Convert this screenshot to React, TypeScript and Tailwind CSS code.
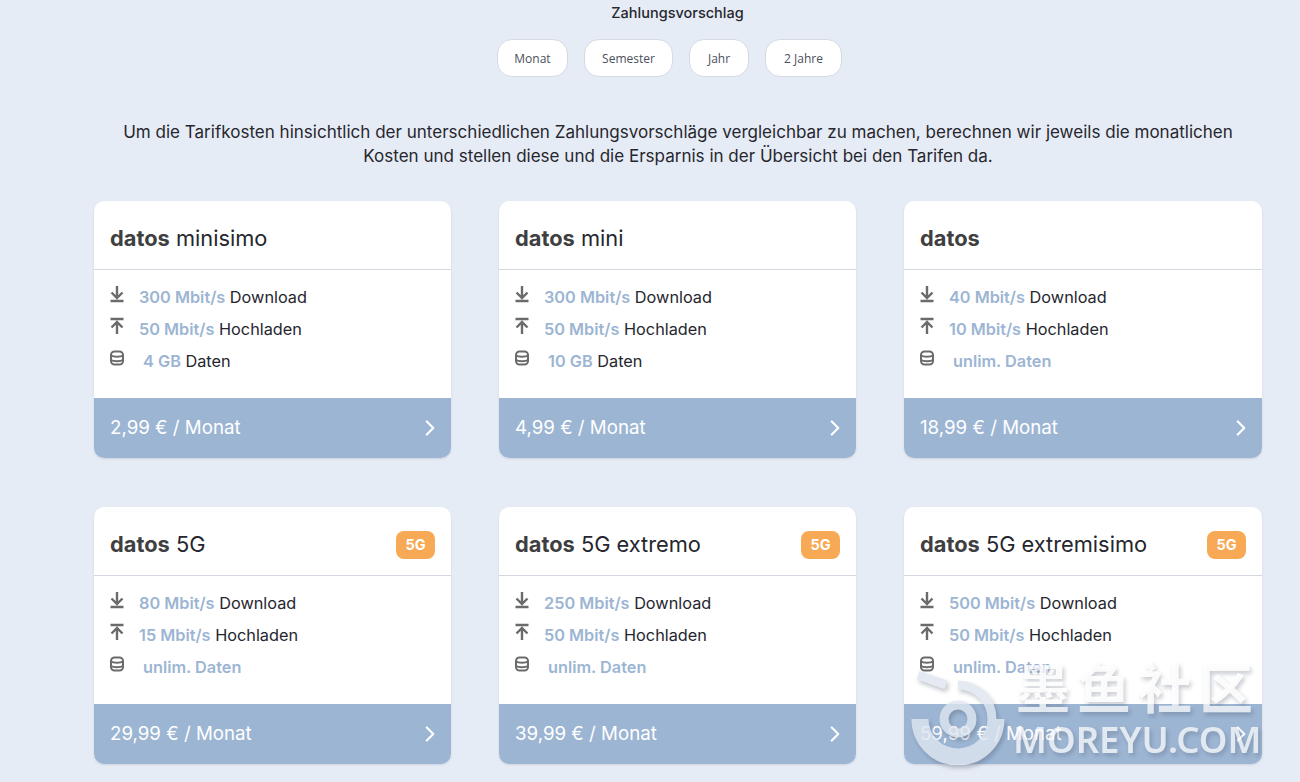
import React from "react";
import { ChevronRight } from "lucide-react";

const plans = [
  { name: "minisimo", down: "300", up: "50", data: "4 GB", price: "2,99" },
  { name: "mini", down: "300", up: "50", data: "10 GB", price: "4,99" },
  { name: "", down: "40", up: "10", data: "", price: "18,99" },
  { name: "5G", down: "80", up: "15", data: "", price: "29,99", g: true },
  { name: "5G extremo", down: "250", up: "50", data: "", price: "39,99", g: true },
  { name: "5G extremisimo", down: "500", up: "50", data: "", price: "59,99", g: true },
];

function Down() {
  return (
    <svg width="16" height="18" viewBox="0 0 16 18" fill="none" stroke="#6b6b6e" strokeWidth="2.4">
      <path d="M8 1v12M2.500 7.500 8 13l5.500-5.500M1.500 16h13" />
    </svg>
  );
}
function Up() {
  return (
    <svg width="16" height="18" viewBox="0 0 16 18" fill="none" stroke="#6b6b6e" strokeWidth="2.4">
      <path d="M8 17V5M2.500 10.500 8 5l5.500 5.500M1.500 2h13" />
    </svg>
  );
}
function Db() {
  return (
    <svg width="16" height="16" viewBox="0 0 16 16" fill="none" stroke="#6b6b6e" strokeWidth="2">
      <rect x="2" y="1.500" width="12" height="13" rx="3.500" />
      <path d="M2 5.500c2 1.500 10 1.500 12 0M2 10c2 1.500 10 1.500 12 0" />
    </svg>
  );
}

function Row({ icon, value, label, extra }: { icon: React.ReactNode; value: string; label?: string; extra?: boolean }) {
  return (
    <div className="flex h-[32px] items-center">
      <span className="flex w-[16px] -translate-y-[3px] justify-center">{icon}</span>
      <span className={`text-[16.3px] whitespace-nowrap ${extra ? "ml-[18px]" : "ml-[14px]"}`}>
        <b className="font-semibold text-[#9cb5d3]">{value}</b>
        {label ? <span className="text-[#26262e]"> {label}</span> : null}
      </span>
    </div>
  );
}

function Card({ p }: { p: (typeof plans)[number] }) {
  return (
    <div className="flex h-[257px] flex-col overflow-hidden rounded-[10px] bg-white shadow-[0_1px_2px_rgba(60,70,100,0.15)]">
      <div className="flex h-[69px] shrink-0 items-center justify-between border-b border-[#d5d7e0] px-[16px] pt-[7px]">
        <div className="text-[21.800px] text-[#26262e]">
          <b className="font-bold text-[#3f3f42]">datos</b>
          {p.name ? " " + p.name : ""}
        </div>
        {p.g ? (
          <span className="flex h-[28px] w-[39px] items-center justify-center rounded-[8px] bg-[#f7a955] text-[14.5px] font-bold text-white">
            5G
          </span>
        ) : null}
      </div>
      <div className="flex-1 pt-[11px] pl-[15px]">
        <Row icon={<Down />} value={`${p.down} Mbit/s`} label="Download" />
        <Row icon={<Up />} value={`${p.up} Mbit/s`} label="Hochladen" />
        <Row icon={<Db />} value={p.data || "unlim. Daten"} label={p.data ? "Daten" : undefined} extra />
      </div>
      <div className="flex h-[60px] shrink-0 items-center justify-between bg-[#9cb5d3] pr-[8px] pl-[16px] text-[18.700px] text-white">
        <span>{p.price} € / Monat</span>
        <ChevronRight size={26} color="white" strokeWidth={2} />
      </div>
    </div>
  );
}

export default function App() {
  return (
    <div
      className="relative h-[782px] overflow-hidden bg-[#e6ecf5] pl-[94px]"
      style={{ fontFamily: "Inter, 'Liberation Sans', sans-serif" }}
    >
      <div className="w-[1168px]">
        <div className="flex h-[26px] items-center justify-center pr-[1px] text-[14.500px] font-medium text-[#26262e]">
          Zahlungsvorschlag
        </div>
        <div
          className="mt-[13px] flex justify-center gap-[16px] pr-[17px] text-[12px] text-[#4a4f5c]"
          style={{ fontFamily: "'Open Sans', sans-serif" }}
        >
          {[
            ["Monat", "w-[71px]"],
            ["Semester", "w-[89px]"],
            ["Jahr", "w-[60px]"],
            ["2 Jahre", "w-[77px]"],
          ].map(([t, w]) => (
            <div
              key={t}
              className={`flex h-[38px] items-center justify-center rounded-[15px] border border-[#d5d9e3] bg-white pt-[1px] ${w}`}
            >
              {t}
            </div>
          ))}
        </div>
        <p className="mt-[43px] px-[20px] text-center text-[17.050px] leading-[24px] text-[#26262e]">
          Um die Tarifkosten hinsichtlich der unterschiedlichen Zahlungsvorschläge vergleichbar zu machen, berechnen wir
          jeweils die monatlichen Kosten und stellen diese und die Ersparnis in der Übersicht bei den Tarifen da.
        </p>
        <div className="mt-[33px] grid grid-cols-[357px_357px_358px] gap-x-[48px] gap-y-[49px]">
          {plans.map((p) => (
            <Card key={p.price} p={p} />
          ))}
        </div>
      </div>
      <div className="pointer-events-none absolute top-[655px] left-[908px] flex opacity-80 drop-shadow-[2px_3px_2px_rgba(70,80,100,0.4)]">
        <svg width="104" height="110" viewBox="0 0 104 110" fill="none" stroke="#dfe6f0" strokeWidth="9">
          <circle cx="50" cy="64" r="14" />
          <path d="M50 30a34 34 0 1 1-34 34M8 64a42 42 0 0 0 84 0" />
          <path d="M10 20l28 10" />
        </svg>
        <div className="ml-[4px] text-white/90">
          <div
            className="text-[54px] leading-[62px] font-bold tracking-[7px]"
            style={{ fontFamily: "'Noto Sans CJK SC', sans-serif" }}
          >
            墨鱼社区
          </div>
          <div
            className="-ml-[3px] text-[36.500px] leading-[44px] font-semibold"
            style={{ fontFamily: "'Noto Sans', sans-serif" }}
          >
            MOREYU.COM
          </div>
        </div>
      </div>
    </div>
  );
}
